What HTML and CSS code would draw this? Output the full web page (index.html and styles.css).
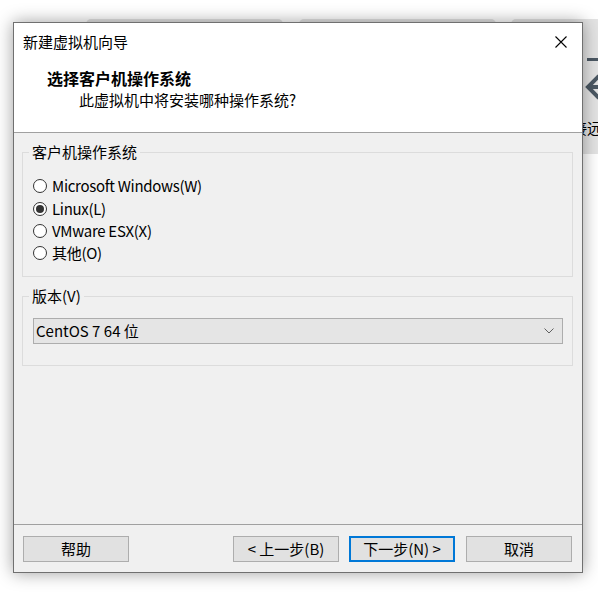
FILE: index.html
```html
<!DOCTYPE html>
<html lang="zh-CN">
<head>
<meta charset="utf-8">
<title>新建虚拟机向导</title>
<link rel="stylesheet" href="styles.css">
</head>
<body>
<div class="desktop">
  <div class="tile tile-1"></div>
  <div class="tile tile-2"></div>
  <div class="tile tile-3">
    <svg class="tile-icon" width="60" height="50" viewBox="0 0 60 50">
      <rect x="10" y="0" width="44" height="3" fill="#4b5863"/>
      <path d="M22 18 L11 29 L22 40" fill="none" stroke="#4b5863" stroke-width="4"/>
      <path d="M12 29 H50" stroke="#4b5863" stroke-width="4"/>
    </svg>
    <div class="tile-label">连接远程服务器</div>
  </div>

  <div class="dialog">
    <div class="titlebar">
      <span class="title">新建虚拟机向导</span>
      <svg class="close" width="12" height="12" viewBox="0 0 12 12">
        <path d="M0.5 0.5 L11.5 11.5 M11.5 0.5 L0.5 11.5" stroke="#000" stroke-width="1.1"/>
      </svg>
    </div>
    <div class="header">
      <div class="heading">选择客户机操作系统</div>
      <div class="subheading">此虚拟机中将安装哪种操作系统?</div>
    </div>
    <div class="content">
      <div class="group group-os">
        <span class="legend">客户机操作系统</span>
        <div class="radio-row"><span class="radio"></span><span class="radio-label">Microsoft Windows(W)</span></div>
        <div class="radio-row"><span class="radio checked"></span><span class="radio-label">Linux(L)</span></div>
        <div class="radio-row"><span class="radio"></span><span class="radio-label">VMware ESX(X)</span></div>
        <div class="radio-row"><span class="radio"></span><span class="radio-label">其他(O)</span></div>
      </div>
      <div class="group group-ver">
        <span class="legend">版本(V)</span>
        <div class="select">
          <span>CentOS 7 64 位</span>
          <svg class="chevron" width="10" height="6" viewBox="0 0 10 6">
            <path d="M0.5 0.5 L5 5 L9.5 0.5" fill="none" stroke="#606060" stroke-width="1"/>
          </svg>
        </div>
      </div>
    </div>
    <div class="footer">
      <button class="btn">帮助</button>
      <span class="spacer"></span>
      <button class="btn">&lt; 上一步(B)</button>
      <button class="btn btn-default">下一步(N) &gt;</button>
      <button class="btn btn-cancel">取消</button>
    </div>
  </div>
</div>
</body>
</html>
```
FILE: styles.css
```css
* { box-sizing: border-box; }
html, body {
  margin: 0;
  padding: 0;
  background: #ffffff;
}
body {
  width: 598px;
  height: 593px;
  overflow: hidden;
  font-family: "Noto Sans CJK SC", "Noto Sans", sans-serif;
  font-size: 15px;
  color: #000;
}
.desktop {
  position: relative;
  width: 598px;
  height: 593px;
  overflow: hidden;
}
.tile {
  position: absolute;
  top: 19px;
  width: 197px;
  height: 135px;
  background: #e3e3e3;
  border-radius: 5px;
}
.tile-1 { left: 86px; }
.tile-2 { left: 299px; }
.tile-3 { left: 511px; }
.tile-icon {
  position: absolute;
  left: 66px;
  top: 39px;
}
.tile-label {
  position: absolute;
  left: 0;
  right: 0;
  top: 99px;
  text-align: center;
  font-size: 15px;
  line-height: 20px;
  color: #000;
}
.dialog {
  position: absolute;
  left: 13px;
  top: 22px;
  width: 570px;
  height: 551px;
  border: 1px solid #707070;
  background: #f0f0f0;
  box-shadow: 0 0 16px rgba(0, 0, 0, 0.38);
  display: flex;
  flex-direction: column;
}
.titlebar {
  height: 38px;
  background: #fff;
  display: flex;
  align-items: center;
  padding-left: 9px;
}
.title {
  flex: 1;
  line-height: 20px;
}
.close {
  margin-right: 15px;
}
.header {
  background: #fff;
  height: 72px;
  border-bottom: 1px solid #a0a0a0;
  padding-top: 7px;
}
.heading {
  font-weight: bold;
  font-size: 16px;
  line-height: 20px;
  padding-left: 33px;
}
.subheading {
  line-height: 20px;
  margin-top: 2px;
  padding-left: 65px;
}
.content {
  flex: 1;
  padding: 19px 9px 0 8px;
}
.group {
  position: relative;
  border: 1px solid #dcdcdc;
}
.legend {
  position: absolute;
  top: -11px;
  left: 6px;
  padding: 0 3px;
  background: #f0f0f0;
  line-height: 20px;
}
.group-os {
  height: 125px;
  padding: 22px 0 0 10px;
}
.radio-row {
  display: flex;
  align-items: center;
  height: 22.4px;
  line-height: 22px;
}
.radio-label {
  letter-spacing: -0.3px;
}
.radio {
  width: 14px;
  height: 14px;
  border: 1px solid #333;
  border-radius: 50%;
  background: #fff;
  margin-right: 5px;
  display: flex;
  align-items: center;
  justify-content: center;
}
.radio.checked::after {
  content: "";
  width: 8px;
  height: 8px;
  border-radius: 50%;
  background: #333;
}
.group-ver {
  margin-top: 19px;
  height: 70px;
  padding: 21px 9px 0 10px;
}
.select {
  height: 26px;
  border: 1px solid #adadad;
  background: #e5e5e5;
  display: flex;
  align-items: center;
  padding: 0 8px 0 2px;
  line-height: 22px;
}
.select span { flex: 1; }
.footer {
  border-top: 1px solid #a0a0a0;
  padding: 11px 10px 10px 9px;
  display: flex;
  align-items: center;
}
.spacer { flex: 1; }
.btn {
  width: 106px;
  height: 26px;
  border: 1px solid #adadad;
  background: #e1e1e1;
  font-family: inherit;
  font-size: 15px;
  line-height: 20px;
  color: #000;
  padding: 0;
  margin: 0;
}
.btn-default {
  border: 2px solid #0078d7;
  margin-left: 10px;
}
.btn-cancel {
  margin-left: 11px;
}
```
